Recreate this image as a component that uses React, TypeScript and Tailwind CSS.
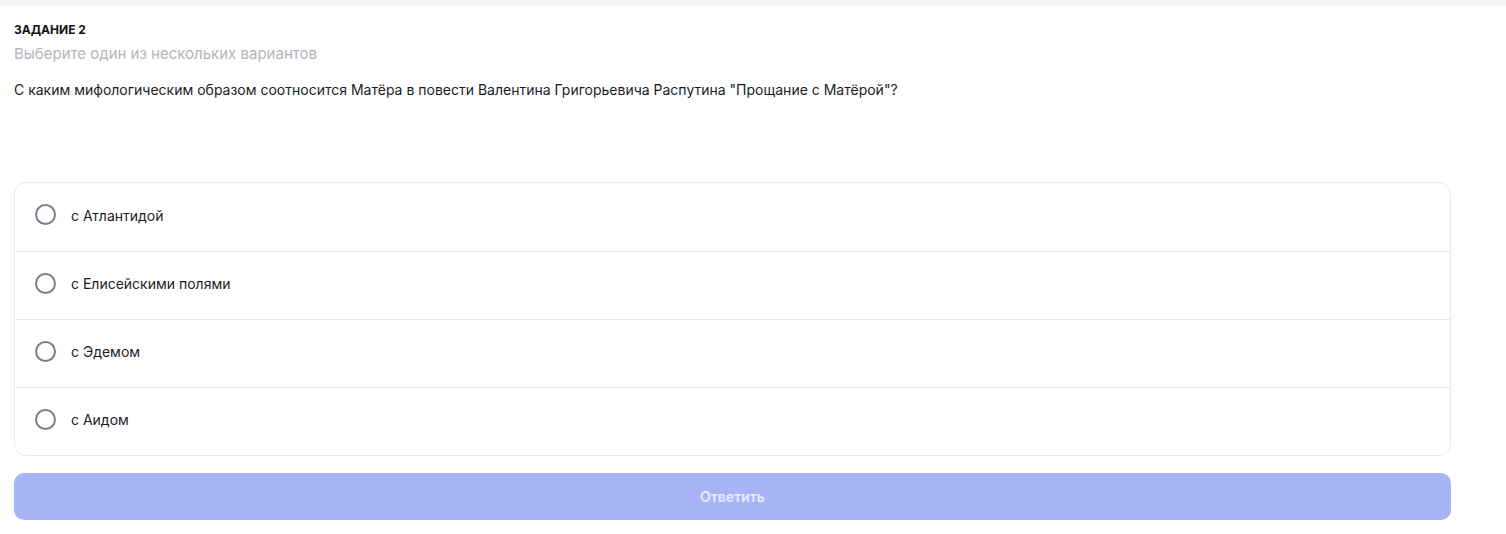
const options = ['с Атлантидой', 'с Елисейскими полями', 'с Эдемом', 'с Аидом'];

export default function App() {
  return (
    <div className="min-h-[534px] bg-white font-['Inter',sans-serif] text-[#1b1b24]">
      <div className="h-[5px] bg-[#f3f3f8]" />
      <div className="pl-[14px] pr-[55px]">
        <div className="pt-[17px] text-[12px] font-bold leading-[16px] uppercase text-[#111]">Задание 2</div>
        <div className="mt-[6px] text-[15px] leading-[20px] text-[#b3b3bd]">Выберите один из нескольких вариантов</div>
        <div className="mt-[16px] text-[14px] leading-[20px] text-[#1b1b24]">
          С каким мифологическим образом соотносится Матёра в повести Валентина Григорьевича Распутина "Прощание с Матёрой"?
        </div>
        <div className="mt-[82px] rounded-[12px] border border-[#e8e8ee] flex flex-col">
          {options.map((o, i) => (
            <label
              key={o}
              className={`flex items-center h-[68px] pl-[20px] gap-[15px] cursor-pointer ${i > 0 ? 'border-t border-[#e8e8ee]' : ''}`}
            >
              <span className="w-[21px] h-[21px] -mt-[5px] rounded-full border-2 border-[#7d7b8f]" />
              <span className="text-[14px] leading-[18px] -mt-[3px] text-[#1b1b24]">{o}</span>
            </label>
          ))}
        </div>
        <button className="mt-[17px] w-full h-[47px] rounded-[10px] bg-[#a7b5f7] text-[14px] font-semibold text-[#e6ebff]">
          Ответить
        </button>
      </div>
    </div>
  );
}
